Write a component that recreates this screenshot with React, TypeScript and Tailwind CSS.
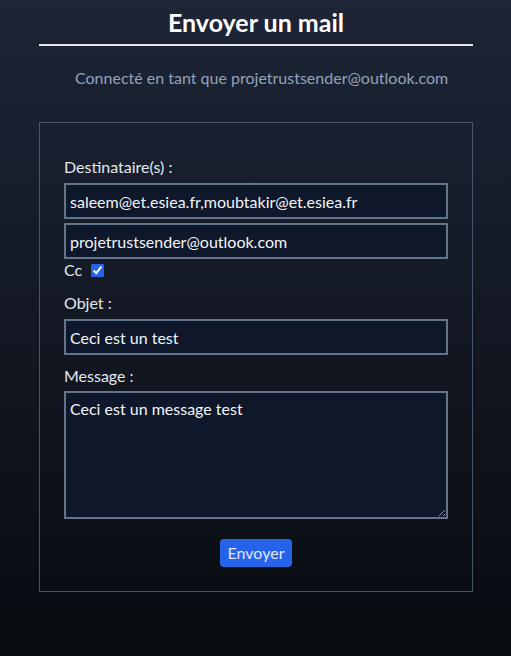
import React, { useState } from 'react';

export default function App() {
    const [to, setTo] = useState('saleem@et.esiea.fr,moubtakir@et.esiea.fr');
    const [cc, setCc] = useState('projetrustsender@outlook.com');
    const [withCc, setWithCc] = useState(true);
    const [subject, setSubject] = useState('Ceci est un test');
    const [body, setBody] = useState('Ceci est un message test');

    const inputClass =
        'w-full h-9 px-[4px] bg-[#0f172a] border-2 border-[#64748b] text-[#f1f5f9] text-base outline-none';

    return (
        <div
            className="min-h-screen w-full bg-gradient-to-b from-[#1d2537] to-[#080b10] text-[#e2e8f0]"
            style={{ fontFamily: 'Lato, "Noto Sans", sans-serif' }}
        >
            <div className="ml-[39px] mr-[38px] pt-[6px] pb-16">
                <h1 className="text-center text-[25px] leading-8 font-bold text-white">Envoyer un mail</h1>
                <hr className="mt-[6px] h-[2px] border-0 bg-[#e5e7eb]" />

                <p className="mt-5 pl-9 text-base leading-6 text-[#94a3b8] whitespace-nowrap">
                    Connecté en tant que projetrustsender@outlook.com
                </p>

                <form
                    className="mt-8 border border-[#475569] px-6 pt-8 pb-6"
                    onSubmit={(e) => e.preventDefault()}
                >
                    <label className="block text-base leading-6 mb-1">Destinataire(s) :</label>
                    <input className={inputClass} value={to} onChange={(e) => setTo(e.target.value)} />
                    <input className={`${inputClass} mt-1`} value={cc} onChange={(e) => setCc(e.target.value)} />

                    <div className="flex items-center h-5 mt-px">
                        <span className="text-base">Cc</span>
                        <input
                            type="checkbox"
                            checked={withCc}
                            onChange={(e) => setWithCc(e.target.checked)}
                            className="ml-[9px] w-[13px] h-[13px] accent-[#2563eb]"
                        />
                    </div>

                    <label className="block text-base leading-6 mt-[11px] mb-1">Objet :</label>
                    <input className={inputClass} value={subject} onChange={(e) => setSubject(e.target.value)} />

                    <label className="block text-base leading-6 mt-[9px] mb-[3px]">Message :</label>
                    <textarea
                        className="w-full h-32 px-[4px] py-[4px] bg-[#0f172a] border-2 border-[#64748b] text-[#f1f5f9] text-base outline-none block"
                        value={body}
                        onChange={(e) => setBody(e.target.value)}
                    />

                    <div className="flex justify-center mt-5">
                        <button
                            type="submit"
                            className="h-7 px-2 rounded bg-[#2563eb] text-[#e0e7ff] text-base leading-none"
                        >
                            Envoyer
                        </button>
                    </div>
                </form>
            </div>
        </div>
    );
}
